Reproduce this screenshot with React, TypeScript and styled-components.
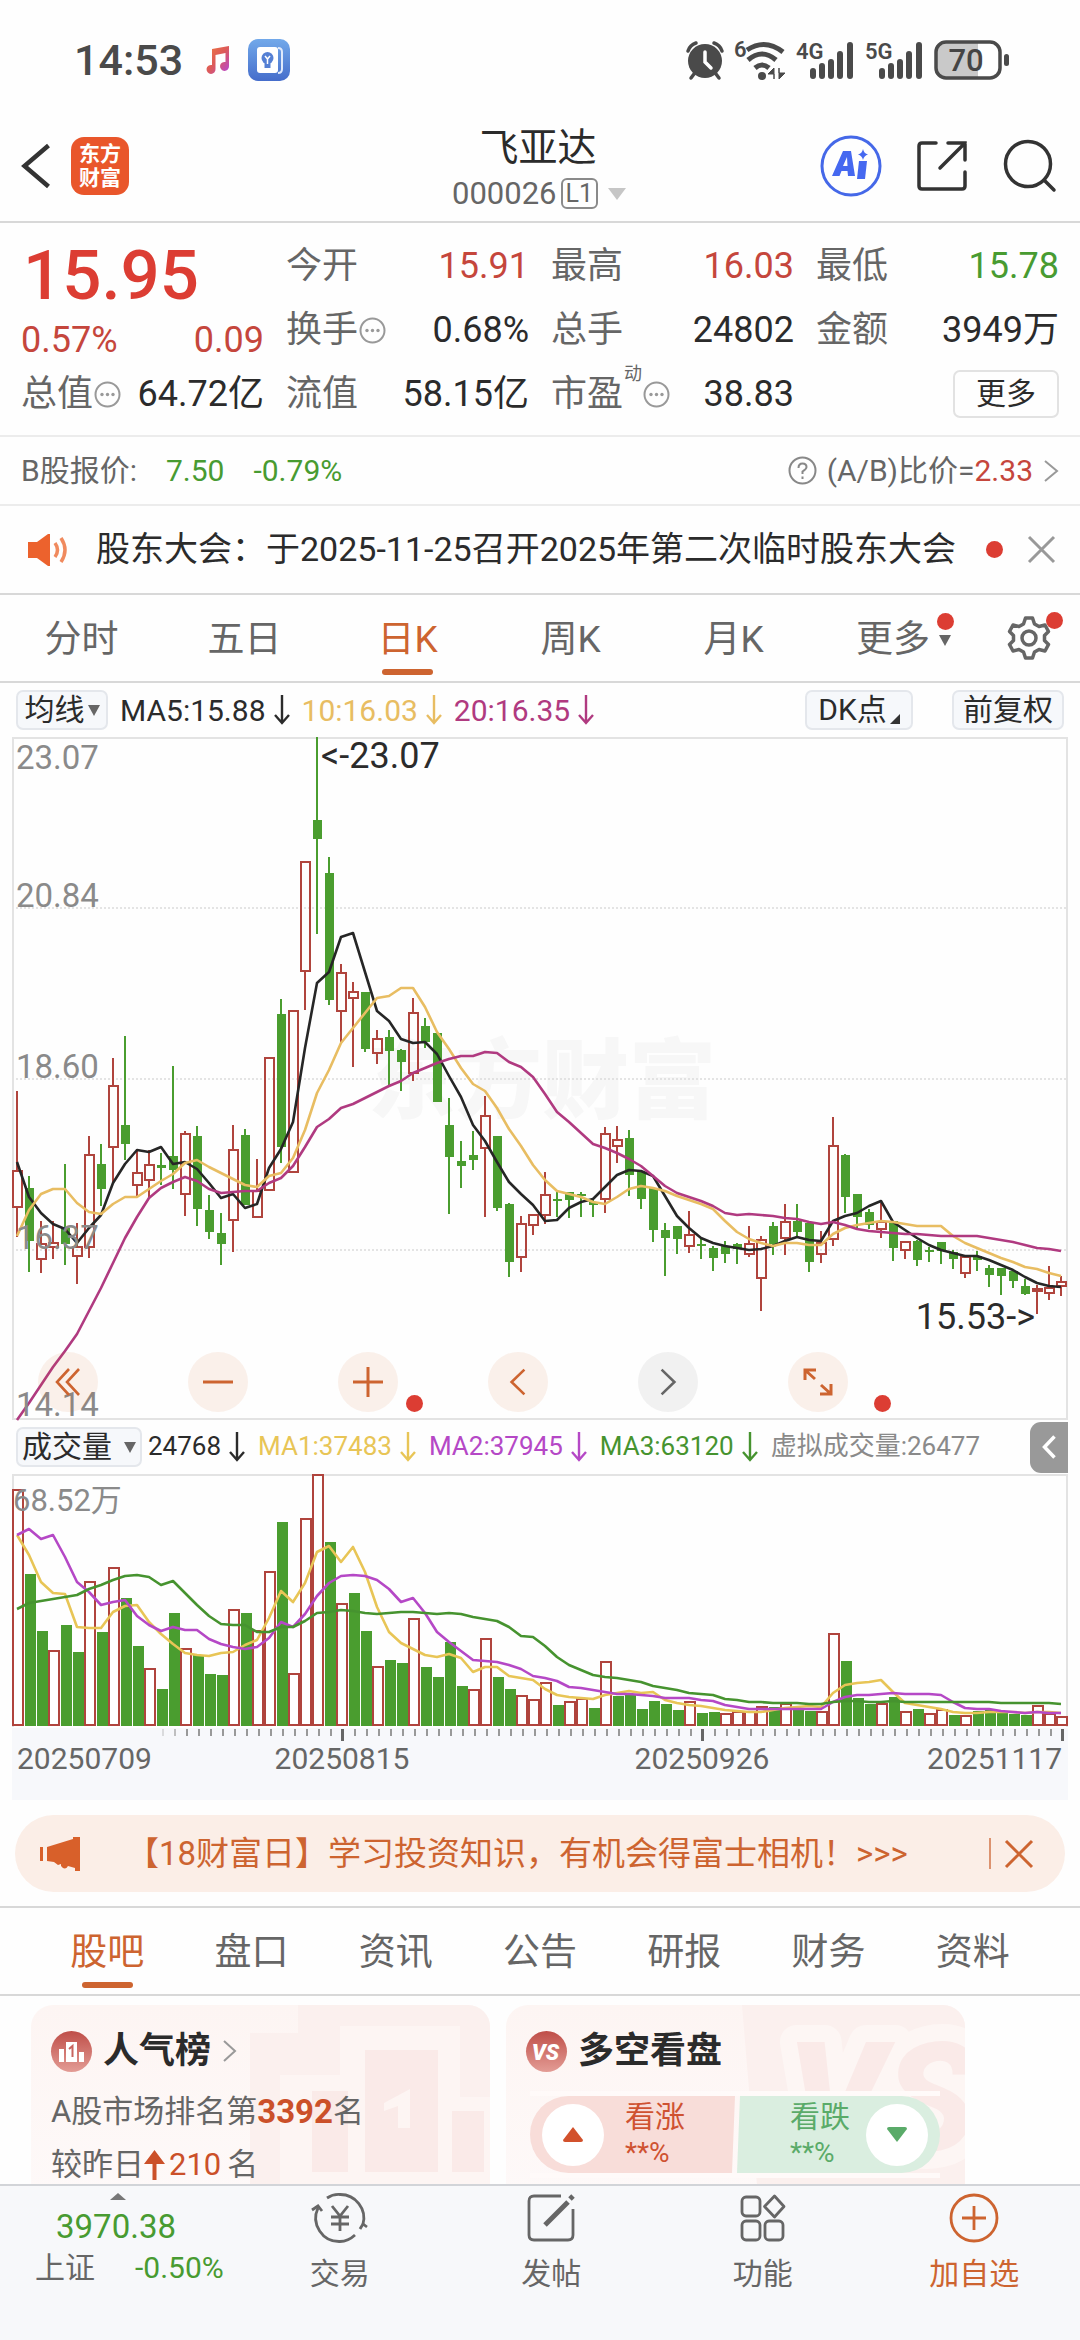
import React from 'react';
import styled, { createGlobalStyle, css } from 'styled-components';

const c = {
  ink: '#2b2b2b',
  grey: '#666666',
  mute: '#8a8a8a',
  line: '#d8d8d8',
  soft: '#ececec',
  red: '#c5463c',
  strong: '#dc3d33',
  green: '#489b31',
  accent: '#cd6430',
  up: '#b0443d',
  down: '#4a9d2f',
  yellow: '#e8bd62',
  plum: '#b03a80',
  violet: '#b548c6',
};
const FONT = "Roboto, 'Noto Sans CJK SC', sans-serif";

const Global = createGlobalStyle`
  * { box-sizing: border-box; }
  body { margin: 0; background: #fefefe; }
  button { font: inherit; color: inherit; background: none; border: 0; padding: 0; margin: 0; cursor: pointer; }
  svg { display: block; flex: none; overflow: visible; }
`;

const Screen = styled.div`
  height: 100vh;
  display: flex;
  flex-direction: column;
  overflow: hidden;
  background: #fefefe;
  color: ${c.ink};
  font-family: ${FONT};
  font-size: 30px;
  line-height: 1.3;
  white-space: nowrap;
`;
const Row = styled.div<{ $gap?: number }>`
  display: flex;
  align-items: center;
  gap: ${(p) => p.$gap ?? 0}px;
`;

/* status bar */
const StatusBar = styled.div`
  display: flex;
  justify-content: space-between;
  align-items: center;
  padding: 35px 70px 35px 74px;
  line-height: 50px;
  color: #4a4a4a;
`;
const Clock = styled.span`
  font-size: 43px;
  font-weight: 500;
  margin-right: 3px;
`;

/* app header */
const Header = styled.header`
  display: grid;
  grid-template-columns: 1fr auto 1fr;
  align-items: center;
  padding: 0 24px 0 20px;
  height: 103px;
  border-bottom: 2px solid ${c.line};
`;
const Lead = styled.div`
  display: flex;
  align-items: center;
  gap: 18px;
  padding-bottom: 10px;
`;
const Logo = styled.span`
  display: grid;
  place-content: center;
  width: 58px;
  height: 58px;
  border-radius: 13px;
  background: #e9562b;
  color: #fff;
  font-size: 21px;
  font-weight: 700;
  line-height: 24px;
  text-align: center;
  white-space: normal;
`;
const TitleBlock = styled.button`
  display: flex;
  flex-direction: column;
  align-items: center;
  padding-bottom: 4px;
`;
const Title = styled.h1`
  margin: 0;
  font-size: 39px;
  font-weight: 400;
  line-height: 50px;
`;
const Code = styled.span`
  display: flex;
  align-items: center;
  gap: 4px;
  padding-left: 2px;
  font-size: 31px;
  line-height: 42px;
  color: ${c.grey};
`;
const Level = styled.span`
  border: 2px solid #8a8a8a;
  border-radius: 6px;
  font-size: 25px;
  line-height: 27px;
  padding: 0 3px;
`;
const Tri = styled.i<{ $w: number; $h: number; $c: string; $up?: boolean }>`
  display: inline-block;
  flex: none;
  width: 0;
  height: 0;
  border-left: ${(p) => p.$w / 2}px solid transparent;
  border-right: ${(p) => p.$w / 2}px solid transparent;
  ${(p) =>
    p.$up
      ? css`border-bottom: ${p.$h}px solid ${p.$c};`
      : css`border-top: ${p.$h}px solid ${p.$c};`}
`;
const CodeTri = styled(Tri)`
  margin-left: 6px;
`;
const Actions = styled.div`
  display: flex;
  justify-content: flex-end;
  align-items: center;
  gap: 34px;
  padding-bottom: 10px;
`;

/* quote block */
const Quote = styled.section`
  display: grid;
  grid-template-columns: repeat(4, 1fr);
  grid-auto-rows: 64px;
  column-gap: 22px;
  padding: 11px 21px 9px;
  border-bottom: 2px solid ${c.soft};
  font-size: 36px;
  line-height: 60px;
`;
const PriceBox = styled.div`
  grid-row: span 2;
  color: ${c.red};
`;
const Price = styled.div`
  padding: 4px 0 0 2px;
  font-size: 69px;
  font-weight: 500;
  line-height: 76px;
  color: ${c.strong};
`;
const Split = styled.div`
  display: flex;
  justify-content: space-between;
  font-size: 36px;
  line-height: 52px;
`;
const Cell = styled.div<{ $tone?: string }>`
  display: flex;
  align-items: center;
  justify-content: space-between;
  color: ${(p) => p.$tone ?? c.ink};
`;
const CellLabel = styled.span`
  display: flex;
  align-items: center;
  gap: 1px;
  color: ${c.grey};
`;
const Sup = styled.sup`
  align-self: flex-start;
  font-size: 18px;
  line-height: 20px;
`;
const MoreButton = styled.button`
  width: 106px;
  height: 48px;
  margin-left: auto;
  border: 2px solid #e2e2e2;
  border-radius: 7px;
  font-size: 30px;
  line-height: 44px;
`;

const BShare = styled.section`
  display: flex;
  justify-content: space-between;
  align-items: center;
  padding: 0 21px;
  line-height: 67px;
  border-bottom: 2px solid ${c.soft};
  color: ${c.grey};
`;
const Tone = styled.span<{ $c: string; $bold?: boolean }>`
  color: ${(p) => p.$c};
  ${(p) => p.$bold && 'font-weight: 700; font-size: 33px;'}
`;
const Notice = styled.section`
  display: flex;
  align-items: center;
  padding: 0 25px 0 28px;
  font-size: 34px;
  line-height: 87px;
  border-bottom: 2px solid ${c.line};
`;
const NoticeText = styled.span`
  flex: 1;
  padding-left: 28px;
`;
const Dot = styled.i`
  width: 17px;
  height: 17px;
  border-radius: 50%;
  background: ${c.strong};
`;
const FloatDot = styled(Dot)<{ $x: string; $y: string }>`
  position: absolute;
  left: ${(p) => p.$x};
  top: ${(p) => p.$y};
`;

/* tabs */
const Tabs = styled.nav<{ $pad?: number }>`
  display: flex;
  padding: 0 ${(p) => p.$pad ?? 0}px;
  border-bottom: 2px solid ${c.line};
  font-size: 37px;
  color: ${c.grey};
`;
const LowerTabs = styled(Tabs)`
  border-top: 2px solid ${c.line};
  border-bottom: 0;
`;
const Tab = styled.button<{ $on?: boolean }>`
  position: relative;
  display: flex;
  justify-content: center;
  align-items: flex-start;
  flex: 163 1 0;
  line-height: 90px;
  height: 86px;
  color: ${(p) => (p.$on ? c.accent : 'inherit')};
  ${(p) =>
    p.$on &&
    css`
      &::after {
        content: '';
        position: absolute;
        bottom: 6px;
        width: 51px;
        height: 6px;
        border-radius: 3px;
        background: ${c.accent};
      }
    `}
`;
const TabMore = styled.span`
  display: flex;
  align-items: center;
  gap: 9px;
  margin-left: 14px;
`;
const GearTab = styled(Tab)`
  flex: 102 1 0;
  align-items: center;
`;

/* indicator rows */
const Indicators = styled.div<{ $small?: boolean }>`
  display: flex;
  align-items: center;
  height: 54px;
  padding: 0 0 0 16px;
  gap: ${(p) => (p.$small ? 13 : 12)}px;
  font-size: ${(p) => (p.$small ? 26 : 30)}px;
`;
const Chip = styled.button<{ $w: number }>`
  display: flex;
  align-items: center;
  justify-content: center;
  gap: 3px;
  min-width: ${(p) => p.$w}px;
  height: 40px;
  border: 2px solid #e4e7ec;
  border-radius: 7px;
  background: #f6f8fb;
  font-size: 30px;
  line-height: 36px;
`;
const VolChip = styled(Chip)`
  gap: 12px;
  margin-right: -7px;
`;
const Ma = styled.span<{ $c: string }>`
  display: flex;
  align-items: center;
  gap: 8px;
  color: ${(p) => p.$c};
`;
const ChipGroup = styled.div`
  display: flex;
  gap: 39px;
  margin-left: auto;
  padding-right: 16px;
`;
const Collapse = styled.button`
  display: grid;
  place-items: center;
  width: 38px;
  height: 51px;
  margin: 0 12px 0 auto;
  background: #999;
  border-radius: 11px 0 0 11px;
`;

const ChartBox = styled.div`
  position: relative;
  margin: 0 12px;
  svg.plot { width: 100%; height: auto; }
`;
const Tools = styled.div`
  position: absolute;
  left: 26px;
  bottom: 8px;
  display: flex;
  gap: 90px;
`;
const ToolButton = styled.button<{ $off?: boolean }>`
  position: relative;
  display: grid;
  place-items: center;
  width: 60px;
  height: 60px;
  border-radius: 50%;
  background: ${(p) => (p.$off ? 'rgba(90,90,90,.08)' : 'rgba(214,98,30,.09)')};
  color: ${(p) => (p.$off ? '#666' : c.accent)};
`;

/* banner */
const Banner = styled.div`
  display: flex;
  align-items: center;
  margin: 15px 15px 14px;
  padding: 0 32px 0 25px;
  border-radius: 39px;
  background: #fbeee7;
  color: ${c.accent};
  font-size: 33px;
  line-height: 77px;
`;
const BannerText = styled.a`
  flex: 1;
  padding-left: 46px;
  color: inherit;
  text-decoration: none;
`;
const Bar = styled.i`
  width: 2px;
  height: 31px;
  margin-right: 14px;
  background: #dc9370;
`;

/* cards */
const Cards = styled.section`
  flex: 1;
  min-height: 0;
  display: flex;
  gap: 16px;
  padding: 9px 31px 0;
  overflow: hidden;
  border-top: 2px solid ${c.line};
`;
const Card = styled.article`
  position: relative;
  flex: 0 0 459px;
  height: 240px;
  border-radius: 22px;
  overflow: hidden;
  padding: 20px 20px 0;
  background: linear-gradient(180deg, #fdf5f3, #fefafa);
  color: ${c.grey};
  font-size: 31px;
`;
const Art = styled.svg`
  position: absolute;
  right: 0;
  top: 0;
`;
const CardTitle = styled.h2`
  position: relative;
  display: flex;
  align-items: center;
  gap: 11px;
  margin: 0;
  font-size: 36px;
  line-height: 52px;
  font-weight: 700;
  color: ${c.ink};
`;
const CardLine = styled.p`
  position: relative;
  display: flex;
  align-items: center;
  margin: 8px 0 0;
  line-height: 53px;
  & + & { margin: 0; }
`;
const RankUp = styled.svg`
  margin-right: 4px;
`;
const RankDelta = styled(Tone)`
  margin-right: 6px;
`;
const Vote = styled.div`
  position: relative;
  display: flex;
  margin: 14px 5px 0 4px;
  border: 5px solid #fffaf9;
  border-width: 5px 0;
  height: 87px;
`;
const VoteSide = styled.button<{ $down?: boolean }>`
  display: flex;
  align-items: center;
  justify-content: ${(p) => (p.$down ? 'flex-end' : 'flex-start')};
  gap: ${(p) => (p.$down ? 16 : 21)}px;
  flex: 1;
  padding: 0 12px;
  border-radius: ${(p) => (p.$down ? '0 39px 39px 0' : '39px 0 0 39px')};
  background: ${(p) => (p.$down ? '#daeee0' : '#f8ddd9')};
  color: ${(p) => (p.$down ? '#5aab69' : '#cf5231')};
  clip-path: ${(p) =>
    p.$down ? 'polygon(5px 0, 100% 0, 100% 100%, 2px 100%)' : 'polygon(0 0, 100% 0, calc(100% - 3px) 100%, 0 100%)'};
  text-align: left;
`;
const Knob = styled.span`
  display: grid;
  place-items: center;
  width: 62px;
  height: 62px;
  border-radius: 50%;
  background: #fff;
`;
const VoteText = styled.span`
  padding-bottom: 3px;
  font-size: 30px;
  line-height: 40px;
  small { display: block; font-size: 28px; line-height: 32px; }
`;

/* bottom bar */
const Bottom = styled.nav`
  display: flex;
  height: 156px;
  border-top: 2px solid #d2d4d8;
  background: #f7f8fa;
  color: ${c.grey};
`;
const Index = styled.button`
  flex: 0 0 234px;
  display: flex;
  flex-direction: column;
  align-items: flex-start;
  padding: 7px 0 0 35px;
`;
const IndexArrow = styled(Tri)`
  margin-left: 75px;
`;
const IndexValue = styled.span`
  font-size: 33px;
  line-height: 42px;
  margin: 6px 0 0 21px;
  color: ${c.green};
`;
const NavItem = styled.button<{ $c?: string }>`
  flex: 1 1 0;
  display: flex;
  flex-direction: column;
  align-items: center;
  padding-top: 7px;
  gap: 9px;
  line-height: 44px;
  color: ${(p) => p.$c ?? c.grey};
`;

/* ---------- chart data: [rising, high, low, bodyTop, bodyBottom] ---------- */
type Candle = [number, number, number, number, number];
const candles: Candle[] = [
  [1, 1091, 1237, 1171, 1207], [0, 1176, 1272, 1188, 1241], [1, 1221, 1273, 1244, 1259], [1, 1221, 1259, 1243, 1247],
  [0, 1164, 1265, 1228, 1244], [1, 1223, 1284, 1247, 1256], [1, 1136, 1258, 1155, 1247], [0, 1144, 1206, 1164, 1189],
  [1, 1058, 1182, 1086, 1147], [0, 1036, 1160, 1125, 1144], [1, 1149, 1197, 1173, 1185], [1, 1150, 1198, 1165, 1180],
  [0, 1153, 1185, 1165, 1168], [0, 1066, 1189, 1156, 1170], [1, 1131, 1216, 1134, 1194], [0, 1126, 1226, 1136, 1209],
  [0, 1195, 1239, 1210, 1232], [0, 1213, 1265, 1233, 1244], [1, 1125, 1252, 1150, 1220], [0, 1129, 1205, 1135, 1205],
  [1, 1159, 1217, 1191, 1217], [1, 1058, 1190, 1058, 1190], [0, 999, 1163, 1014, 1147], [1, 1011, 1172, 1011, 1172],
  [1, 862, 1010, 862, 971], [0, 737, 934, 820, 839], [0, 857, 1005, 873, 1000], [1, 964, 1043, 973, 1011],
  [1, 982, 1067, 992, 998], [0, 992, 1052, 992, 1049], [1, 1030, 1064, 1039, 1053], [0, 1030, 1085, 1037, 1051],
  [0, 1049, 1091, 1050, 1062], [1, 998, 1081, 1013, 1073], [0, 1018, 1048, 1026, 1042], [0, 1033, 1102, 1033, 1102],
  [0, 1098, 1214, 1125, 1157], [0, 1141, 1188, 1161, 1166], [0, 1131, 1170, 1155, 1160], [1, 1096, 1217, 1116, 1148],
  [0, 1136, 1211, 1136, 1208], [0, 1203, 1277, 1204, 1262], [1, 1216, 1272, 1224, 1257], [1, 1214, 1235, 1215, 1225],
  [1, 1172, 1224, 1195, 1215], [0, 1191, 1217, 1199, 1201], [0, 1192, 1218, 1192, 1200], [0, 1192, 1217, 1194, 1196],
  [0, 1198, 1217, 1202, 1205], [1, 1127, 1213, 1134, 1199], [1, 1126, 1163, 1140, 1146], [0, 1130, 1196, 1138, 1175],
  [0, 1171, 1209, 1172, 1199], [0, 1188, 1242, 1188, 1230], [0, 1223, 1276, 1230, 1238], [0, 1226, 1254, 1226, 1239],
  [1, 1211, 1253, 1235, 1246], [0, 1238, 1259, 1244, 1246], [0, 1246, 1271, 1248, 1258], [0, 1241, 1263, 1246, 1254],
  [0, 1243, 1264, 1244, 1249], [1, 1226, 1257, 1244, 1254], [1, 1236, 1311, 1240, 1278], [0, 1222, 1255, 1226, 1244],
  [1, 1204, 1255, 1222, 1238], [0, 1204, 1236, 1221, 1232], [0, 1222, 1272, 1223, 1262], [1, 1231, 1263, 1243, 1254],
  [1, 1117, 1246, 1146, 1239], [0, 1154, 1213, 1155, 1197], [0, 1194, 1229, 1194, 1217], [0, 1209, 1229, 1212, 1225],
  [1, 1203, 1238, 1222, 1229], [0, 1221, 1261, 1221, 1248], [1, 1242, 1259, 1242, 1250], [0, 1240, 1266, 1241, 1260],
  [0, 1247, 1262, 1250, 1251], [0, 1242, 1264, 1242, 1251], [0, 1250, 1269, 1252, 1259], [1, 1257, 1278, 1257, 1273],
  [0, 1251, 1271, 1256, 1260], [0, 1265, 1287, 1268, 1275], [0, 1268, 1295, 1268, 1276], [0, 1271, 1288, 1271, 1281],
  [0, 1279, 1295, 1286, 1294], [1, 1285, 1314, 1289, 1291], [1, 1266, 1300, 1288, 1293], [1, 1276, 1296, 1282, 1286],
];
const ma5 = [1162, 1197, 1213, 1224, 1229, 1243, 1228, 1215, 1183, 1164, 1150, 1152, 1147, 1164, 1162, 1169, 1183, 1198, 1194, 1208, 1204, 1168, 1149, 1122, 1048, 983, 972, 937, 933, 972, 1011, 1021, 1039, 1043, 1042, 1054, 1076, 1097, 1125, 1141, 1162, 1182, 1194, 1205, 1221, 1220, 1208, 1202, 1199, 1187, 1175, 1170, 1171, 1176, 1196, 1216, 1228, 1238, 1243, 1246, 1248, 1250, 1249, 1246, 1241, 1237, 1240, 1241, 1221, 1216, 1213, 1206, 1201, 1222, 1230, 1238, 1245, 1250, 1253, 1256, 1256, 1260, 1265, 1270, 1277, 1283, 1286, 1287];
const ma10 = [1236, 1210, 1194, 1189, 1189, 1203, 1212, 1214, 1204, 1197, 1197, 1189, 1181, 1174, 1163, 1160, 1167, 1173, 1179, 1185, 1187, 1176, 1173, 1158, 1130, 1093, 1070, 1043, 1028, 1013, 998, 996, 988, 988, 1007, 1032, 1049, 1068, 1084, 1091, 1108, 1129, 1146, 1165, 1180, 1191, 1194, 1197, 1202, 1204, 1197, 1189, 1186, 1188, 1191, 1196, 1200, 1204, 1209, 1221, 1232, 1239, 1243, 1246, 1243, 1243, 1245, 1245, 1234, 1228, 1225, 1223, 1221, 1222, 1224, 1226, 1226, 1226, 1236, 1243, 1248, 1253, 1258, 1262, 1267, 1269, 1273, 1276];
const ma20 = [1420, 1403, 1385, 1367, 1351, 1334, 1311, 1288, 1263, 1238, 1217, 1198, 1188, 1182, 1177, 1181, 1189, 1193, 1192, 1191, 1191, 1183, 1178, 1166, 1147, 1127, 1119, 1108, 1104, 1098, 1092, 1086, 1081, 1073, 1068, 1063, 1059, 1056, 1056, 1052, 1053, 1062, 1067, 1077, 1094, 1112, 1122, 1133, 1144, 1148, 1153, 1159, 1166, 1176, 1186, 1193, 1197, 1201, 1206, 1213, 1215, 1214, 1215, 1216, 1218, 1219, 1222, 1224, 1222, 1225, 1229, 1231, 1232, 1233, 1234, 1234, 1235, 1236, 1236, 1236, 1236, 1238, 1240, 1242, 1245, 1248, 1249, 1251];
const volTop = [1490, 1574, 1631, 1651, 1625, 1652, 1582, 1632, 1568, 1598, 1646, 1669, 1689, 1613, 1649, 1655, 1674, 1675, 1610, 1613, 1631, 1572, 1522, 1674, 1519, 1475, 1542, 1604, 1593, 1631, 1667, 1660, 1663, 1619, 1667, 1677, 1642, 1686, 1690, 1639, 1677, 1689, 1696, 1700, 1683, 1705, 1702, 1699, 1708, 1662, 1696, 1695, 1709, 1701, 1704, 1710, 1702, 1713, 1712, 1714, 1712, 1712, 1707, 1707, 1704, 1709, 1711, 1712, 1634, 1661, 1698, 1704, 1704, 1697, 1712, 1709, 1714, 1710, 1715, 1716, 1711, 1709, 1713, 1714, 1715, 1706, 1714, 1717];
const volRising = new Set([0, 3, 6, 8, 11, 14, 18, 20, 21, 23, 24, 25, 27, 30, 33, 38, 39, 42, 43, 44, 46, 47, 49, 56, 59, 60, 61, 62, 64, 67, 68, 72, 74, 76, 77, 79, 85, 86, 87]);
const vma1 = [1535, 1555, 1582, 1593, 1594, 1627, 1628, 1628, 1612, 1606, 1605, 1622, 1634, 1644, 1653, 1655, 1656, 1653, 1652, 1645, 1640, 1618, 1591, 1602, 1583, 1552, 1546, 1562, 1547, 1572, 1607, 1632, 1643, 1649, 1655, 1657, 1654, 1658, 1672, 1667, 1667, 1676, 1678, 1680, 1689, 1695, 1697, 1698, 1699, 1695, 1693, 1691, 1693, 1692, 1700, 1703, 1705, 1706, 1708, 1710, 1711, 1712, 1712, 1710, 1708, 1707, 1706, 1707, 1693, 1685, 1683, 1682, 1680, 1692, 1703, 1705, 1707, 1709, 1712, 1713, 1713, 1712, 1712, 1712, 1713, 1712, 1712, 1713];
const vma2 = [1535, 1529, 1539, 1535, 1557, 1582, 1592, 1605, 1602, 1600, 1616, 1625, 1631, 1627, 1630, 1630, 1639, 1644, 1647, 1649, 1647, 1638, 1622, 1627, 1614, 1596, 1583, 1576, 1575, 1576, 1580, 1589, 1602, 1598, 1613, 1632, 1642, 1651, 1660, 1661, 1662, 1665, 1669, 1676, 1678, 1681, 1687, 1688, 1690, 1692, 1694, 1694, 1695, 1696, 1698, 1698, 1698, 1700, 1701, 1705, 1707, 1709, 1709, 1709, 1709, 1709, 1709, 1709, 1702, 1697, 1695, 1695, 1694, 1693, 1694, 1694, 1694, 1695, 1702, 1708, 1709, 1709, 1711, 1712, 1713, 1712, 1713, 1713];
const vma3 = [1609, 1603, 1601, 1599, 1597, 1595, 1589, 1585, 1580, 1576, 1575, 1577, 1585, 1581, 1593, 1605, 1616, 1624, 1625, 1625, 1632, 1632, 1627, 1627, 1621, 1613, 1612, 1610, 1611, 1613, 1614, 1613, 1612, 1612, 1613, 1614, 1613, 1614, 1617, 1619, 1621, 1627, 1636, 1637, 1646, 1657, 1665, 1670, 1675, 1677, 1678, 1680, 1682, 1686, 1688, 1690, 1693, 1694, 1695, 1699, 1700, 1702, 1702, 1703, 1703, 1703, 1704, 1704, 1702, 1701, 1701, 1702, 1702, 1701, 1702, 1702, 1702, 1702, 1702, 1702, 1702, 1702, 1703, 1703, 1703, 1703, 1703, 1704];

const cx = (i: number) => 17 + i * 12;
const Line = ({ data, color }: { data: number[]; color: string }) => (
  <polyline
    points={data.map((y, i) => `${cx(i)},${y}`).join(' ')}
    fill="none"
    stroke={color}
    strokeWidth={2.6}
    strokeLinejoin="round"
  />
);

const PriceChart = () => (
  <svg className="plot" viewBox="12 737 1056 683" fontFamily={FONT} role="img" aria-label="日K">
    <text x={368} y={1112} fontSize={87} fontWeight={900} fill="#f7f7f7">东方财富</text>
    <g stroke="#dcdcdc" strokeWidth={1.5} strokeDasharray="2 2">
      <path d="M12 908H1067M12 1079H1067M12 1250H1067" />
    </g>
    <path d="M13 1419V738H1067V1419Z" fill="none" stroke="#e3e3e3" strokeWidth={2} />
    {candles.map(([rise, hi, lo, t, b], i) => {
      const x = cx(i);
      return rise ? (
        <g key={i} stroke={c.up} strokeWidth={2} fill="none">
          <path d={`M${x} ${hi}V${t}M${x} ${b}V${lo}`} />
          <rect x={x - 4} y={t} width={9} height={b - t} />
        </g>
      ) : (
        <g key={i} fill={c.down}>
          <rect x={x - 1} y={hi} width={2} height={lo - hi} />
          <rect x={x - 4} y={t} width={9} height={Math.max(2, b - t)} />
        </g>
      );
    })}
    <Line data={ma5} color="#262626" />
    <Line data={ma10} color={c.yellow} />
    <Line data={ma20} color={c.plum} />
    <g fontSize={33} fill={c.mute}>
      <text x={16} y={769}>23.07</text>
      <text x={16} y={907}>20.84</text>
      <text x={16} y={1078}>18.60</text>
      <text x={16} y={1249}>16.37</text>
      <text x={16} y={1416}>14.14</text>
    </g>
    <g fontSize={36} fill={c.ink}>
      <text x={321} y={768}>&lt;-23.07</text>
      <text x={1035} y={1329} textAnchor="end">15.53-&gt;</text>
    </g>
  </svg>
);

const VolumeChart = () => (
  <svg className="plot" viewBox="12 1474 1056 326" fontFamily={FONT} role="img" aria-label="成交量">
    <rect x={12} y={1728} width={1056} height={72} fill="#f7f8fb" />
    <path d="M13 1727V1475H1067V1727" fill="none" stroke="#e3e3e3" strokeWidth={2} />
    {volTop.map((t, i) =>
      volRising.has(i) ? (
        <rect key={i} x={cx(i) - 4} y={t} width={10} height={1725 - t} fill="#fff" stroke={c.up} strokeWidth={2} />
      ) : (
        <rect key={i} x={cx(i) - 4} y={t} width={11} height={1726 - t} fill={c.down} />
      ),
    )}
    <Line data={vma1} color="#e8c556" />
    <Line data={vma2} color={c.violet} />
    <Line data={vma3} color="#46932f" />
    {Array.from({ length: 76 }, (_, n) => n + 12).map((i) => {
      const major = i === 27 || i === 57 || i === 87;
      return (
        <rect
          key={i}
          x={cx(i) + (major ? 0 : 1)}
          y={1729}
          width={major ? 3 : 2}
          height={major ? 12 : 7}
          fill={major ? '#666' : '#999'}
          opacity={i < 14 ? (i - 11) * 0.3 : 1}
        />
      );
    })}
    <g fill={c.mute} fontSize={31}>
      <text x={13} y={1511}>68.52万</text>
    </g>
    <g fill={c.grey} fontSize={30}>
      <text x={17} y={1769}>20250709</text>
      <text x={342} y={1769} textAnchor="middle">20250815</text>
      <text x={702} y={1769} textAnchor="middle">20250926</text>
      <text x={1062} y={1769} textAnchor="end">20251117</text>
    </g>
  </svg>
);

/* ---------- icons ---------- */
const Chevron = ({ w, h, color, sw, right }: { w: number; h: number; color: string; sw: number; right?: boolean }) => (
  <svg width={w} height={h} fill="none" stroke={color} strokeWidth={sw}>
    <path d={right ? `M${sw} ${sw}L${w - sw} ${h / 2}L${sw} ${h - sw}` : `M${w - sw} ${sw}L${sw} ${h / 2}L${w - sw} ${h - sw}`} />
  </svg>
);
const Cross = ({ s, color, sw }: { s: number; color: string; sw: number }) => (
  <svg width={s} height={s} stroke={color} strokeWidth={sw}>
    <path d={`M1 1L${s - 1} ${s - 1}M${s - 1} 1L1 ${s - 1}`} />
  </svg>
);
const DownArrow = () => (
  <svg width={16} height={30} fill="none" stroke="currentColor" strokeWidth={2.4}>
    <path d="M8 0V28M1 20L8 28L15 20" />
  </svg>
);
const Dots = () => (
  <svg width={27} height={27} fill="none" stroke="#999" strokeWidth={2}>
    <circle cx={13.5} cy={13.5} r={12} />
    <g fill="#999" stroke="none">
      <circle cx={8} cy={13.5} r={1.7} /><circle cx={13.5} cy={13.5} r={1.7} /><circle cx={19} cy={13.5} r={1.7} />
    </g>
  </svg>
);
const Signal = ({ label }: { label: string }) => (
  <svg width={58} height={40} fontFamily={FONT} fill="#4a4a4a">
    <text x={0} y={19} fontSize={22} fontWeight={600}>{label}</text>
    <path d="M17 31V36M26 26V36M35 22V36M44 14V36M54 5V36" stroke="#4a4a4a" strokeWidth={6} strokeLinecap="round" />
  </svg>
);

const StatusLeft = () => (
  <Row $gap={19}>
    <Clock>14:53</Clock>
    <svg width={24} height={28} viewBox="0 0 24 28">
      <defs>
        <linearGradient id="note" x1="0" y1="0" x2="1" y2="1">
          <stop offset="0" stopColor="#f0783c" /><stop offset=".5" stopColor="#dc5a5a" /><stop offset="1" stopColor="#b445dc" />
        </linearGradient>
      </defs>
      <path d="M7 3L24 0V20A4.5 4.5 0 1 1 20.500 16V7L10.500 9V23A4.500 4.500 0 1 1 7 19Z" fill="url(#note)" />
    </svg>
    <svg width={42} height={42} viewBox="0 0 42 42">
      <defs>
        <linearGradient id="app" x1="0" y1="0" x2="0" y2="1">
          <stop offset="0" stopColor="#72a9ea" /><stop offset="1" stopColor="#456dcb" />
        </linearGradient>
      </defs>
      <rect width={42} height={42} rx={10} fill="url(#app)" />
      <path d="M30 9Q34 9 34 13V30Q34 34 30 34" fill="none" stroke="#dfe9fb" strokeWidth={2} />
      <rect x={9} y={8} width={21} height={26} rx={3} fill="#fff" />
      <circle cx={19.500} cy={19} r={6} fill="#5580d4" />
      <path d="M16.500 24H22.500V29H16.500Z" fill="#5580d4" />
      <path d="M17 17L19.500 20L22 17M19.500 20V25" stroke="#fff" strokeWidth={1.500} fill="none" />
    </svg>
  </Row>
);
const StatusRight = () => (
  <Row $gap={11}>
    <svg width={38} height={40} viewBox="0 0 38 40" fill="none" stroke="#4a4a4a" strokeLinecap="round">
      <circle cx={19} cy={21} r={17} fill="#4a4a4a" stroke="none" />
      <path d="M2 11Q4 5 10 3M36 11Q34 5 28 3M8 34L5 38M30 34L33 38" strokeWidth={3.500} />
      <path d="M19 12V22L25 28" stroke="#fff" strokeWidth={3.500} />
    </svg>
    <svg width={50} height={40} viewBox="0 0 50 40" fill="none" stroke="#4a4a4a" strokeWidth={5} fontFamily={FONT}>
      <text x={-1} y={17} fontSize={22} fontWeight={600} fill="#4a4a4a" stroke="none">6</text>
      <path d="M12 10Q30 -2 48 12M13 20Q27 8 41 20M20 28Q27 22 34 28" />
      <circle cx={27} cy={36} r={4} fill="#4a4a4a" stroke="none" />
      <path d="M39 39V28L33 34H39ZM44 28V39L50 33H44Z" fill="#4a4a4a" strokeWidth={1} />
    </svg>
    <Signal label="4G" />
    <Signal label="5G" />
    <svg width={76} height={40} viewBox="0 0 76 40" fontFamily={FONT}>
      <path d="M12 3H44V37H12Q3 37 3 28V12Q3 3 12 3Z" fill="#c9c9c9" />
      <rect x={2} y={2} width={64} height={36} rx={10} fill="none" stroke="#4a4a4a" strokeWidth={3.500} />
      <rect x={70} y={14} width={5} height={12} rx={2.500} fill="#4a4a4a" />
      <text x={32} y={31} fontSize={31} fontWeight={500} textAnchor="middle" fill="#444">70</text>
    </svg>
  </Row>
);

const Stat = ({ label, value, tone, icon, sup }: { label: string; value: string; tone?: string; icon?: boolean; sup?: string }) => (
  <Cell $tone={tone}>
    <CellLabel>{label}{sup && <Sup>{sup}</Sup>}{icon && <Dots />}</CellLabel>
    <span>{value}</span>
  </Cell>
);

export default function App() {
  return (
    <Screen>
      <Global />
      <StatusBar><StatusLeft /><StatusRight /></StatusBar>
      <Header>
        <Lead>
          <button aria-label="返回"><Chevron w={33} h={50} color="#333" sw={4.500} /></button>
          <Logo>东方<br />财富</Logo>
        </Lead>
        <TitleBlock>
          <Title>飞亚达</Title>
          <Code>000026<Level>L1</Level><CodeTri $w={18} $h={12} $c="#c6c6c6" /></Code>
        </TitleBlock>
        <Actions>
          <button aria-label="Ai">
            <svg width={62} height={62} viewBox="0 0 62 62" fill="#4568f0">
              <circle cx={31} cy={31} r={29} fill="none" stroke="#4568e8" strokeWidth={3} />
              <path fillRule="evenodd" d="M23 16H31L35 41H28L27.500 36H21.500L19.500 41H12ZM27 22L23 31H27.500Z" strokeLinejoin="round" />
              <path d="M39 26H47L45 44H37Z" />
              <path d="M43 14Q44 18.500 48 19.500Q44 20.500 43 25Q42 20.500 38 19.500Q42 18.500 43 14Z" />
            </svg>
          </button>
          <button aria-label="分享">
            <svg width={52} height={52} viewBox="0 0 52 52" fill="none" stroke="#333" strokeWidth={3.500} strokeLinecap="round">
              <path d="M20 3H6Q3 3 3 6V46Q3 49 6 49H46Q49 49 49 46V32" />
              <path d="M32 3H49V20M49 3L24 28" />
            </svg>
          </button>
          <button aria-label="搜索">
            <svg width={54} height={54} viewBox="0 0 54 54" fill="none" stroke="#333" strokeWidth={3.500} strokeLinecap="round">
              <circle cx={26} cy={25} r={22.500} />
              <path d="M42 41L52 51" />
            </svg>
          </button>
        </Actions>
      </Header>

      <Quote>
        <PriceBox>
          <Price>15.95</Price>
          <Split><span>0.57%</span><span>0.09</span></Split>
        </PriceBox>
        <Stat label="今开" value="15.91" tone={c.red} />
        <Stat label="最高" value="16.03" tone={c.red} />
        <Stat label="最低" value="15.78" tone={c.green} />
        <Stat label="换手" value="0.68%" icon />
        <Stat label="总手" value="24802" />
        <Stat label="金额" value="3949万" />
        <Stat label="总值" value="64.72亿" icon />
        <Stat label="流值" value="58.15亿" />
        <Stat label="市盈" value="38.83" sup="动" icon />
        <Cell><MoreButton>更多</MoreButton></Cell>
      </Quote>

      <BShare>
        <Row $gap={29}>
          <span>B股报价:</span>
          <Tone $c={c.green}>7.50</Tone>
          <Tone $c={c.green}>-0.79%</Tone>
        </Row>
        <Row $gap={10}>
          <svg width={29} height={29} fill="none" stroke="#888" strokeWidth={2}>
            <circle cx={14.500} cy={14.500} r={13} />
            <path d="M10.500 12Q10.500 7.500 14.500 7.500Q18.500 7.500 18.500 11Q18.500 13 14.500 15.500V18M14.500 20.500V23" />
          </svg>
          <span>(A/B)比价=<Tone $c={c.red}>2.33</Tone></span>
          <Chevron w={16} h={24} color="#999" sw={2} right />
        </Row>
      </BShare>

      <Notice>
        <svg width={40} height={32} viewBox="0 0 40 32">
          <path d="M0 8H9L20 0H22V32H20L9 24H0Z" fill="#ec622d" />
          <path d="M27 9Q32 16 27 23M33 4Q41 16 33 28" fill="none" stroke="#f08a5e" strokeWidth={3.500} />
        </svg>
        <NoticeText>股东大会：于2025-11-25召开2025年第二次临时股东大会</NoticeText>
        <Row $gap={25}>
          <Dot />
          <button aria-label="关闭"><Cross s={27} color="#999" sw={3} /></button>
        </Row>
      </Notice>

      <Tabs>
        <Tab>分时</Tab>
        <Tab>五日</Tab>
        <Tab $on>日K</Tab>
        <Tab>周K</Tab>
        <Tab>月K</Tab>
        <Tab>
          <TabMore>更多<Tri $w={13} $h={11} $c={c.grey} /></TabMore>
          <FloatDot $x="calc(50% + 40px)" $y="18px" />
        </Tab>
        <GearTab aria-label="设置">
          <svg width={44} height={44} viewBox="0 0 44 44" fill="none" stroke={c.grey} strokeWidth={3.500} strokeLinejoin="round">
            <path d="M18.500 2H25.500L27.500 8L32 10.500L38 9L41.500 15.500L37.500 19.500V24.500L41.500 28.500L38 35L32 33.500L27.500 36L25.500 42H18.500L16.500 36L12 33.500L6 35L2.500 28.500L6.500 24.500V19.500L2.500 15.500L6 9L12 10.500L16.500 8Z" />
            <circle cx={22} cy={22} r={7} />
          </svg>
          <FloatDot $x="calc(50% + 17px)" $y="17px" />
        </GearTab>
      </Tabs>

      <Indicators>
        <Chip $w={92}>均线<Tri $w={12} $h={11} $c={c.grey} /></Chip>
        <Ma $c={c.ink}>MA5:15.88<DownArrow /></Ma>
        <Ma $c={c.yellow}>10:16.03<DownArrow /></Ma>
        <Ma $c={c.plum}>20:16.35<DownArrow /></Ma>
        <ChipGroup>
          <Chip $w={108}>
            DK点
            <svg width={10} height={30}><path d="M10 19V29H0Z" fill="#333" /></svg>
          </Chip>
          <Chip $w={112}>前复权</Chip>
        </ChipGroup>
      </Indicators>

      <ChartBox>
        <PriceChart />
        <Tools>
          <ToolButton aria-label="最左">
            <svg width={26} height={28} fill="none" stroke="currentColor" strokeWidth={2.600}><path d="M14 1L2 14L14 27M24 1L12 14L24 27" /></svg>
          </ToolButton>
          <ToolButton aria-label="缩小">
            <svg width={30} height={30} stroke="currentColor" strokeWidth={3}><path d="M0 15H30" /></svg>
          </ToolButton>
          <ToolButton aria-label="放大">
            <svg width={30} height={30} stroke="currentColor" strokeWidth={3}><path d="M0 15H30M15 0V30" /></svg>
            <FloatDot $x="68px" $y="43px" />
          </ToolButton>
          <ToolButton aria-label="左移"><Chevron w={18} h={30} color="currentColor" sw={2.600} /></ToolButton>
          <ToolButton aria-label="右移" $off><Chevron w={18} h={30} color="currentColor" sw={2.600} right /></ToolButton>
          <ToolButton aria-label="全屏">
            <svg width={30} height={30} fill="none" stroke="currentColor" strokeWidth={3}>
              <path d="M2 13V3H13M2 3L12 12M28 17V27H17M28 27L18 18" />
            </svg>
            <FloatDot $x="86px" $y="43px" />
          </ToolButton>
        </Tools>
      </ChartBox>

      <Indicators $small>
        <VolChip $w={126}>成交量<Tri $w={12} $h={11} $c={c.grey} /></VolChip>
        <Ma $c={c.ink}>24768<DownArrow /></Ma>
        <Ma $c="#e8c556">MA1:37483<DownArrow /></Ma>
        <Ma $c={c.violet}>MA2:37945<DownArrow /></Ma>
        <Ma $c="#46932f">MA3:63120<DownArrow /></Ma>
        <Ma $c={c.mute}>虚拟成交量:26477</Ma>
        <Collapse aria-label="收起"><Chevron w={17} h={28} color="#fff" sw={3.500} /></Collapse>
      </Indicators>
      <ChartBox><VolumeChart /></ChartBox>

      <Banner>
        <svg width={40} height={34} viewBox="0 0 40 34" fill="#d8602a">
          <path d="M0 10H3V24H0ZM7 10L33 2V0H40V34H35V31L28 29Q25 34 21 29V27L18 28L14 25L7 24Z" />
        </svg>
        <BannerText href="#banner">【18财富日】学习投资知识，有机会得富士相机！&gt;&gt;&gt;</BannerText>
        <Bar />
        <button aria-label="关闭"><Cross s={28} color={c.accent} sw={3} /></button>
      </Banner>

      <LowerTabs $pad={35}>
        <Tab $on>股吧</Tab>
        <Tab>盘口</Tab>
        <Tab>资讯</Tab>
        <Tab>公告</Tab>
        <Tab>研报</Tab>
        <Tab>财务</Tab>
        <Tab>资料</Tab>
      </LowerTabs>

      <Cards>
        <Card>
          <Art width={240} height={180} viewBox="0 0 240 180">
            <path d="M48 0H240V180H0V28H48Z" fill="#fbf0ee" />
            <path d="M90 21H210V92H240V180H30V70H90Z" fill="#fdf5f3" />
            <path d="M115 45H188V167H115ZM62 86H98V167H62ZM202 106H234V167H202Z" fill="#faeae8" />
            <path d="M134 98L160 84V123H148V101L134 106Z" fill="#fdf5f3" />
          </Art>
          <CardTitle>
            <svg width={41} height={41} viewBox="0 0 41 41">
              <defs>
                <linearGradient id="badge" x1="0" y1="0" x2="0" y2="1">
                  <stop offset="0" stopColor="#bf4e48" /><stop offset="1" stopColor="#e39c95" />
                </linearGradient>
              </defs>
              <circle cx={20.500} cy={20.500} r={20.500} fill="url(#badge)" />
              <path d="M8 18H13V31H8ZM15 11H26V31H15ZM28 21H33V31H28Z" fill="#fff" />
              <path d="M18 18L21.500 15V26" stroke="#c8645e" strokeWidth={2} fill="none" />
            </svg>
            人气榜
            <Chevron w={15} h={24} color="#999" sw={2} right />
          </CardTitle>
          <CardLine>A股市场排名第<Tone $c="#cb5029" $bold>3392</Tone>名</CardLine>
          <CardLine>
            较昨日
            <RankUp width={21} height={30} viewBox="0 0 21 30" fill="#cb5029"><path d="M10.500 0L21 14H12.500V30H8.500V14H0Z" /></RankUp>
            <RankDelta $c="#cb5029">210</RankDelta>名
          </CardLine>
        </Card>
        <Card>
          <Art width={240} height={180} viewBox="0 0 240 180" fontFamily={FONT}>
            <path d="M17 0H240V180H32Z" fill="#fbf0ee" />
            <text
              x={62} y={145} fontSize={152} fontWeight={900} fontStyle="italic"
              fill="#faeae8" stroke="#fdf6f4" strokeWidth={34} strokeLinejoin="round" paintOrder="stroke"
            >
              VS
            </text>
          </Art>
          <CardTitle>
            <svg width={41} height={41} viewBox="0 0 41 41" fontFamily={FONT}>
              <circle cx={20.500} cy={20.500} r={20.500} fill="url(#badge)" />
              <text x={19.500} y={28.500} fontSize={22} fontWeight={900} fontStyle="italic" textAnchor="middle" fill="#fff">VS</text>
            </svg>
            多空看盘
          </CardTitle>
          <Vote>
            <VoteSide>
              <Knob><svg width={22} height={17}><path d="M11 1L21 14Q21 16 19 16H3Q1 16 1 14Z" fill="#d2512c" /></svg></Knob>
              <VoteText>看涨<small>**%</small></VoteText>
            </VoteSide>
            <VoteSide $down>
              <VoteText>看跌<small>**%</small></VoteText>
              <Knob><svg width={22} height={17}><path d="M11 16L21 3Q21 1 19 1H3Q1 1 1 3Z" fill="#5aab69" /></svg></Knob>
            </VoteSide>
          </Vote>
        </Card>
      </Cards>

      <Bottom>
        <Index>
          <IndexArrow $w={16} $h={7} $c="#777" $up />
          <IndexValue>3970.38</IndexValue>
          <Row $gap={40}><span>上证</span><Tone $c={c.green}>-0.50%</Tone></Row>
        </Index>
        <NavItem>
          <svg width={56} height={50} viewBox="0 0 56 50" fill="none" stroke="currentColor" strokeWidth={2.800}>
            <path d="M15 5Q21 1 28 1.500A23.500 23.500 0 0 1 51 31M43 42Q36 48.500 28 48.500A23.500 23.500 0 0 1 6 15" />
            <path d="M0 17L6 13L10 18M48 36L51 31L55 34" />
            <path d="M20 13L28 23L36 13M28 23V38M19 24H37M19 31H37" />
          </svg>
          交易
        </NavItem>
        <NavItem>
          <svg width={48} height={50} viewBox="0 0 48 50" fill="none" stroke="currentColor" strokeWidth={2.800}>
            <path d="M34 3H7Q2 3 2 8V42Q2 47 7 47H41Q46 47 46 42V16" />
            <path d="M41 9L18 32" strokeWidth={5} />
            <path d="M43 6L46 3" strokeWidth={5} />
          </svg>
          发帖
        </NavItem>
        <NavItem>
          <svg width={46} height={50} viewBox="0 0 46 50" fill="none" stroke="currentColor" strokeWidth={2.800}>
            <rect x={2} y={4} width={18} height={19} rx={4} />
            <rect x={2} y={28} width={18} height={19} rx={4} />
            <rect x={25} y={28} width={18} height={19} rx={4} />
            <path d="M34.500 3L44 13.500L34.500 24L24.500 13.500Z" strokeLinejoin="round" />
          </svg>
          功能
        </NavItem>
        <NavItem $c={c.accent}>
          <svg width={50} height={50} viewBox="0 0 50 50" fill="none" stroke="currentColor" strokeWidth={2.800}>
            <circle cx={25} cy={25} r={23} /><path d="M25 13V37M13 25H37" />
          </svg>
          加自选
        </NavItem>
      </Bottom>
    </Screen>
  );
}
